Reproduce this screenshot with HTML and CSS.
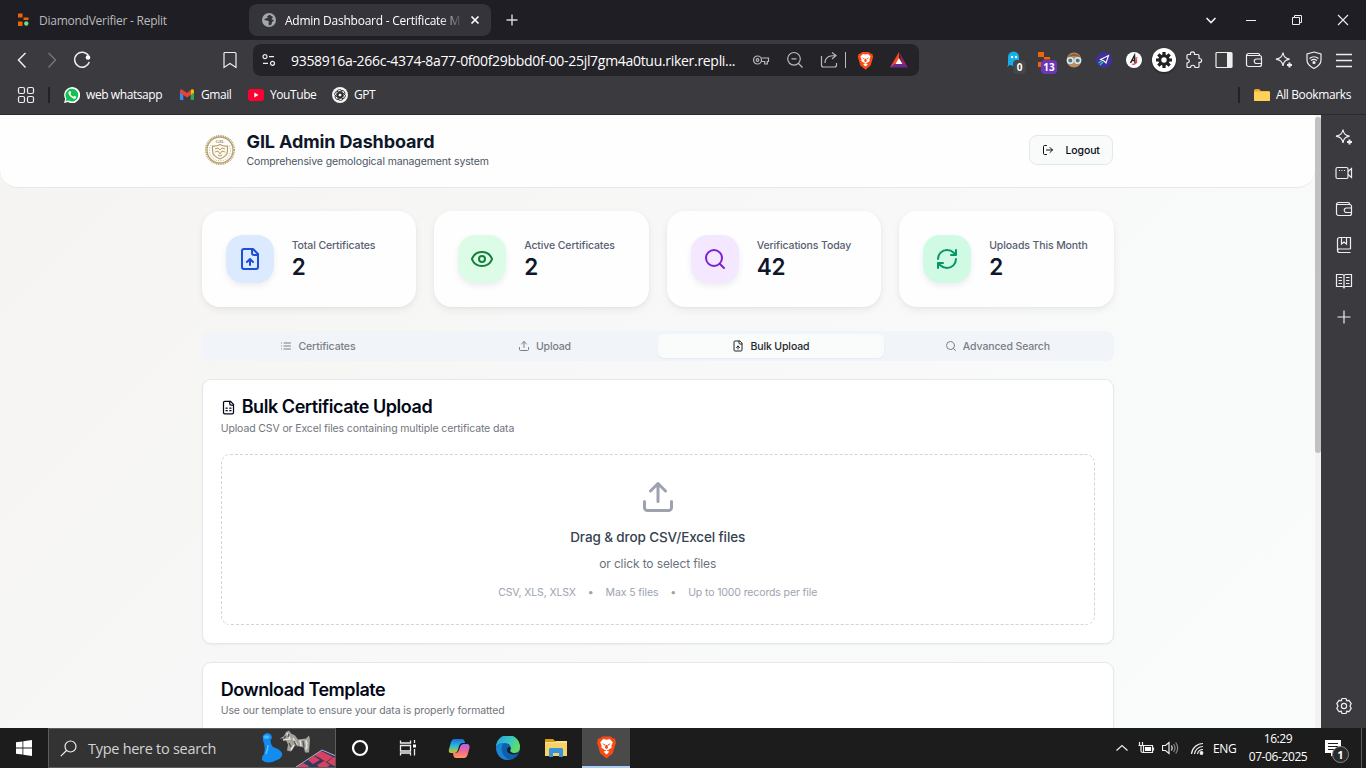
FILE: index.html
```html
<!DOCTYPE html>
<html lang="en">
<head>
<meta charset="utf-8">
<title>Admin Dashboard - Certificate Management</title>
<link rel="stylesheet" href="styles.css">
</head>
<body>
<svg class="defs" width="0" height="0">
  <symbol id="sparkle" viewBox="0 0 18 18"><path d="M8 1.5C8.6 5.5 9.7 7 14.5 8.2 9.7 9.4 8.6 10.500 8 15 7.2 10.500 6 9.400 1 8.200 6 7 7.200 5.500 8 1.500z"/><path d="M14.500 11.500v5M12 14h5" stroke-width="2"/></symbol>
  <symbol id="wallet" viewBox="0 0 18 18"><path d="M1.500 4.500h13a2 2 0 0 1 2 2v7a2 2 0 0 1-2 2h-11a2 2 0 0 1-2-2v-9a2 2 0 0 1 2-2h9.500a1.500 1.500 0 0 1 1.500 2M16.500 8h-5a2.200 2.200 0 0 0 0 4.500h5"/></symbol>
  <symbol id="file-up" viewBox="0 0 24 24"><path d="M15 2H6a2 2 0 0 0-2 2v16a2 2 0 0 0 2 2h12a2 2 0 0 0 2-2V7Z"/><path d="M14 2v4a2 2 0 0 0 2 2h4M12 12v6M15 15l-3-3-3 3"/></symbol>
  <symbol id="search" viewBox="0 0 24 24"><circle cx="11" cy="11" r="8"/><path d="m21 21-4.300-4.300"/></symbol>
  <symbol id="upload" viewBox="0 0 24 24"><path d="M21 15v4a2 2 0 0 1-2 2H5a2 2 0 0 1-2-2v-4M17 8l-5-5-5 5M12 3v12"/></symbol>
  <symbol id="brave" viewBox="0 0 20 22"><path d="M6 1h8l2 2h2l1 4-1 3-2 7-6 5-6-5-2-7-1-3 1-4h2z" fill="#fb4b14"/><path d="m10 4 3-.6 3 3-1.400 3.300.4 1.800-3 2-2 .5-2-.5-3-2 .4-1.800L4 6.400l3-3zM10 14l2.700 1.600L10 18.200l-2.700-2.600z" fill="#fff"/><path d="m5.700 7.300 3 1.200-.5 1.300zM14.300 7.300l-3 1.200.5 1.300zM9 9h2l.5 3-1.500 1-1.500-1z" fill="#fb4b14"/></symbol>
</svg>

<div class="tabstrip">
  <div class="tab tab-idle">
    <svg width="14" height="14" viewBox="0 0 14 14"><path fill="#f26207" d="M1 .5h4.500v4H1zM6.500 4.500h5v2.500h-5zM1 8.500h4.500v4.500H1z"/><circle cx="9.300" cy="10.500" r="2.200" fill="#6fdc8c"/></svg>
    <span class="t-replit">DiamondVerifier - Replit</span>
  </div>
  <div class="tab tab-active">
    <svg width="14" height="14" viewBox="0 0 14 14"><circle cx="7" cy="7" r="7" fill="#a0a7ae"/><path d="M7.500 1.800 5 3.500 6 4.800 3.500 5.500 2 7l3 .5 2 1-.5 2 .5 2 2.500-1L10 9l2-1.500L9.500 6 11 4z" fill="#35343a"/></svg>
    <span class="tab-title">Admin Dashboard - Certificate M</span>
    <svg class="tab-close" width="10" height="10" viewBox="0 0 10 10"><path d="m1.500 1.500 7 7m0-7-7 7" stroke="#fff" stroke-width="1.700"/></svg>
  </div>
  <svg class="newtab" width="12" height="12" viewBox="0 0 12 12"><path d="M6 .5v11M.5 6h11" stroke="#d8d8da" stroke-width="1.400"/></svg>
  <div class="win">
    <svg class="line" width="12" height="12" viewBox="0 0 12 12"><path d="m1.500 4 4.500 4.500L10.500 4" stroke-width="1.700"/></svg>
    <svg class="line" width="12" height="12" viewBox="0 0 12 12"><path d="M1 6.500h10" stroke-width="1"/></svg>
    <svg class="line" width="12" height="12" viewBox="0 0 12 12"><path d="M1.500 3.500h7v7h-7zM3.500 3.500v-2h7v7h-2" stroke-width="1"/></svg>
    <svg class="line" width="12" height="12" viewBox="0 0 12 12"><path d="m1 1 10 10M11 1 1 11" stroke-width="1.100"/></svg>
  </div>
</div>

<div class="toolbar">
  <div class="nav">
    <svg class="line" width="18" height="18" viewBox="0 0 18 18"><path d="M12.500 2 5.500 9l7 7.500" stroke-width="1.500"/></svg>
    <svg class="line dim" width="18" height="18" viewBox="0 0 18 18"><path d="m5.500 2 7 7-7 7.500" stroke-width="1.400"/></svg>
    <svg class="line" width="18" height="18" viewBox="0 0 18 18"><path d="M15.500 4.700A7.500 7.500 0 1 0 16.300 11" stroke-width="1.500"/><circle cx="15" cy="6.500" r="2.300" fill="#fff" stroke="none"/></svg>
  </div>
  <svg class="line bm" width="18" height="18" viewBox="0 0 18 18"><path d="M3 2.500q0-1 1-1h10q1 0 1 1v14L9 12.500 3 16.500z"/></svg>
  <div class="urlbar">
    <svg class="line" width="14" height="14" viewBox="0 0 14 14"><circle cx="3" cy="3.700" r="2"/><path d="M7 3.700h5M1 10.300h5"/><circle cx="10.500" cy="10.300" r="2"/></svg>
    <span class="url">9358916a-266c-4374-8a77-0f00f29bbd0f-00-25jl7gm4a0tuu.riker.repli...</span>
    <div class="urlicons">
      <svg class="line soft" width="18" height="18" viewBox="0 0 18 18"><circle cx="5.500" cy="9" r="4"/><circle cx="5.500" cy="9" r="1.300"/><path d="M9.400 7H16.500v3.500h-1.200V13h-2.600v-2.500H9.300"/></svg>
      <svg class="line soft" width="18" height="18" viewBox="0 0 18 18"><circle cx="8" cy="7.800" r="6.300"/><path d="m12.500 12.500 4 4M5.500 7.800h5"/></svg>
      <svg class="line soft" width="18" height="18" viewBox="0 0 18 18"><path d="M1.500 5v9a2 2 0 0 0 2 2h11a2 2 0 0 0 2-2v-2M5 12c0-5 3-7.500 10.500-7.500M12 1.500l4 3-4 3.500"/></svg>
    </div>
    <i class="urlsep"></i>
    <svg class="u-brave" width="17" height="19"><use href="#brave"/></svg>
    <svg class="u-bat" width="18" height="16" viewBox="0 0 18 16"><path d="M9 0 0 15.500l9-4z" fill="#ff4724"/><path d="m9 0 9 15.500-6-4z" fill="#9e1f63"/><path d="M0 15.500h18l-5-4H5z" fill="#662d91"/><path d="m9 6 3.500 6h-7z" fill="#fff"/></svg>
  </div>
  <div class="exts">
    <div class="ext"><svg width="18" height="18" viewBox="0 0 18 18"><path d="M3 14V6a5.500 5.500 0 0 1 11 0v8l-3-1-3 2-3-1-3 2z" fill="#16aee8"/><circle cx="7" cy="6" r="1.200" fill="#fff"/><circle cx="11" cy="6" r="1.200" fill="#fff"/></svg><b class="badge">0</b></div>
    <div class="ext"><svg width="18" height="18" viewBox="0 0 18 18"><path fill="#f26207" d="M3 1h6v5H3zM9 6h6v2.500H9zM3 11h6v5H3z"/></svg><b class="badge violet">13</b></div>
    <div class="ext"><svg width="16" height="16" viewBox="0 0 16 16"><circle cx="8" cy="8" r="7.500" fill="#bc8c65"/><path d="M1 5q7-7 14 0L8 4z" fill="#89603e"/><circle cx="4.300" cy="8.500" r="2.800" fill="#58717b" stroke="#d7eef5" stroke-width="1.500"/><circle cx="11.700" cy="8.500" r="2.800" fill="#58717b" stroke="#d7eef5" stroke-width="1.500"/></svg></div>
    <div class="ext"><svg width="16" height="16" viewBox="0 0 16 16"><circle cx="8" cy="8" r="8" fill="#40309a"/><path d="m12.500 3.500-2.500 7.500-2-2-3.500-1.500z" fill="none" stroke="#fff" stroke-width="1.100"/><path d="m2.500 11 3-2m-1.500 4 3-3" stroke="#35d0b4" stroke-width="1.200"/></svg></div>
    <div class="ext"><svg width="16" height="16" viewBox="0 0 16 16"><circle cx="8" cy="8" r="8" fill="#fff"/><path d="M4.500 11 8.500 3.500 9 11M5.500 8.500h4" fill="none" stroke="#222" stroke-width="1.500"/><path d="M11.500 5.500C8 6.500 12 8 10.500 10.500 9 12 7 12.500 6 12" fill="none" stroke="#e23b55" stroke-width="1.200"/></svg></div>
    <div class="ext"><svg class="gear" width="24" height="24" viewBox="0 0 24 24"><circle cx="12" cy="12" r="12" fill="#fff"/><g stroke="#222" fill="none"><circle cx="12" cy="12" r="4.200" stroke-width="3"/><path stroke-width="3.200" d="M12 4v3M12 17v3M4 12h3M17 12h3M6.300 6.300l2.200 2.200M15.500 15.500l2.200 2.200M6.300 17.700l2.200-2.200M15.500 8.500l2.200-2.200"/></g></svg></div>
    <div class="ext"><svg class="line" width="18" height="18" viewBox="0 0 18 18"><path d="M2 4.500Q2 3.500 3 3.500h2.500C4.500 0 10.500 0 9.500 3.500H13q1 0 1 1V7.500c3.500 0 3.500 4 0 4v4q0 1-1 1h-3c0-3-4.500-3-4.500 0H3q-1 0-1-1V12c3 0 3-4 0-4z"/></svg></div>
    <div class="ext"><svg class="line" width="18" height="18" viewBox="0 0 18 18"><rect x="1" y="1.500" width="16" height="15" rx="1"/><path d="M12 2h5v14h-5z" fill="#eee" stroke="none"/></svg></div>
    <div class="ext"><svg class="line" width="18" height="18"><use href="#wallet"/></svg></div>
    <div class="ext"><svg class="line" width="18" height="18"><use href="#sparkle"/></svg></div>
    <div class="ext"><svg class="line" width="18" height="18" viewBox="0 0 18 18"><path d="M9 1 16 3v6q0 5-7 8.500Q2 14 2 9V3z"/><path d="M4.500 7.500q4.500-3.500 9 0M6 9.500q3-2.300 6 0"/><circle cx="9" cy="11.500" r="1" fill="#fff"/></svg></div>
    <div class="ext"><svg class="line" width="18" height="18" viewBox="0 0 18 18"><path d="M1 3.500h16M1 9.500h16M1 15.500h16" stroke-width="1.500"/></svg></div>
  </div>
</div>

<div class="bookmarks">
  <svg class="line bgrid" width="18" height="18" viewBox="0 0 18 18"><rect x="1.500" y="1.500" width="6" height="6" rx="1.500"/><rect x="10.500" y="1.500" width="6" height="6" rx="1.500"/><rect x="1.500" y="10.500" width="6" height="6" rx="1.500"/><rect x="10.500" y="10.500" width="6" height="6" rx="1.500"/></svg>
  <i class="bsep"></i>
  <div class="bk bk-wa"><svg width="16" height="16" viewBox="0 0 16 16"><path d="M0 16 1.200 12A8 8 0 1 1 4 14.900z" fill="#fff"/><path d="m1.700 14.300.8-2.700a6.400 6.400 0 1 1 2.100 2z" fill="#12c251"/><path d="M5 4.500 6.300 4l1 2-.8 1Q7.500 9 9.300 9.700l1-1 2 1-.5 1.500q-1 1-3 0Q5.500 9.800 4.500 7q-.4-1.500.5-2.500z" fill="#fff"/></svg><span>web whatsapp</span></div>
  <div class="bk bk-gm"><svg width="14" height="11" viewBox="0 0 14 11"><path d="M0 2v8q0 1 1 1h2.300V4z" fill="#4285f4"/><path d="M14 2v8q0 1-1 1h-2.300V4z" fill="#34a853"/><path d="M10.700 1 12 .2Q14-.2 14 2v1.500L10.700 6z" fill="#fbbc04"/><path d="M0 3.500V2Q0-.5 2 .4L7 4l3.700-3v5L7 8.500 3.300 6z" fill="#ea4335"/></svg><span>Gmail</span></div>
  <div class="bk bk-yt"><svg width="16" height="12" viewBox="0 0 16 12"><rect width="16" height="12" rx="3" fill="#f03"/><path d="m6.300 3.500 4.200 2.500-4.200 2.500z" fill="#fff"/></svg><span>YouTube</span></div>
  <div class="bk bk-gpt"><svg width="16" height="16" viewBox="0 0 16 16"><circle cx="8" cy="8" r="8" fill="#f5f5f5"/><g fill="none" stroke="#222" stroke-width=".8"><rect x="5" y="2.500" width="5" height="8" rx="2.500"/><rect x="5" y="2.500" width="5" height="8" rx="2.500" transform="rotate(60 8 8)"/><rect x="5" y="2.500" width="5" height="8" rx="2.500" transform="rotate(120 8 8)"/><rect x="5" y="2.500" width="5" height="8" rx="2.500" transform="rotate(180 8 8)"/><rect x="5" y="2.500" width="5" height="8" rx="2.500" transform="rotate(240 8 8)"/><rect x="5" y="2.500" width="5" height="8" rx="2.500" transform="rotate(300 8 8)"/></g></svg><span>GPT</span></div>
  <i class="bsep bsep-r"></i>
  <div class="bk bk-all"><svg width="16" height="14" viewBox="0 0 16 14"><path d="M0 2.500Q0 1 1.500 1H5l2 2h7.500Q16 3 16 4.500v7q0 1.500-1.500 1.500h-13Q0 13 0 11.500z" fill="#e8a92a"/><rect y="3.500" width="16" height="9.500" rx="1" fill="#ffd257"/></svg><span>All Bookmarks</span></div>
</div>

<div class="middle">
  <main class="page">
    <header class="head">
      <div class="head-in">
        <svg class="seal" width="36" height="36" viewBox="0 0 36 36" fill="none" stroke="#b6a06a"><circle cx="18" cy="18" r="14.300" stroke-width="1.500" stroke-dasharray="1 .8"/><circle cx="18" cy="18" r="13" stroke-width="1.300"/><path d="M9 13a10.500 10.500 0 1 0 18 0" stroke-width="1" stroke-dasharray="1 1.500"/><path d="M10.500 14q4 .5 7.500-1.500 3.500 2 7.500 1.500v5q0 5-7.500 8-7.500-3-7.500-8z" stroke-width="1.200" fill="#faf7ef"/><path d="m13 17 3-1 2 2 2-2 3 1m-10 3 3-1 2 3 2-3 3 1m-7 3 2 1 2-1"/><text x="18" y="11.300" text-anchor="middle" class="seal-t" stroke="none" fill="#a08a50">GIL</text></svg>
        <div><h1 class="h1">GIL Admin Dashboard</h1><p class="tagline">Comprehensive gemological management system</p></div>
        <div class="logout"><svg class="ico" width="12" height="12" viewBox="0 0 24 24"><path d="M9 21H5a2 2 0 0 1-2-2V5a2 2 0 0 1 2-2h4M16 17l5-5-5-5M21 12H9"/></svg><span>Logout</span></div>
      </div>
    </header>
    <div class="content">
      <section class="stats">
        <div class="stat"><div class="sicon blue"><svg class="ico" width="24" height="24"><use href="#file-up"/></svg></div><div><p class="slabel">Total Certificates</p><p class="snum">2</p></div></div>
        <div class="stat"><div class="sicon green"><svg class="ico" width="24" height="24" viewBox="0 0 24 24"><path d="M2.060 12.350a1 1 0 0 1 0-.7 10.750 10.750 0 0 1 19.880 0 1 1 0 0 1 0 .7 10.750 10.750 0 0 1-19.880 0"/><circle cx="12" cy="12" r="3"/></svg></div><div><p class="slabel">Active Certificates</p><p class="snum">2</p></div></div>
        <div class="stat"><div class="sicon purple"><svg class="ico" width="24" height="24"><use href="#search"/></svg></div><div><p class="slabel">Verifications Today</p><p class="snum">42</p></div></div>
        <div class="stat"><div class="sicon emerald"><svg class="ico" width="24" height="24" viewBox="0 0 24 24"><path d="M3 12a9 9 0 0 1 9-9 9.750 9.750 0 0 1 6.740 2.740L21 8M21 3v5h-5M21 12a9 9 0 0 1-9 9 9.750 9.750 0 0 1-6.740-2.740L3 16M8 16H3v5"/></svg></div><div><p class="slabel">Uploads This Month</p><p class="snum">2</p></div></div>
      </section>
      <nav class="tabs">
        <div class="tb"><svg class="ico" width="12" height="12" viewBox="0 0 24 24"><path d="M3 12h.01M3 18h.01M3 6h.01M8 12h13M8 18h13M8 6h13"/></svg><span>Certificates</span></div>
        <div class="tb"><svg class="ico" width="12" height="12"><use href="#upload"/></svg><span>Upload</span></div>
        <div class="tb on"><svg class="ico" width="12" height="12"><use href="#file-up"/></svg><span>Bulk Upload</span></div>
        <div class="tb"><svg class="ico" width="12" height="12"><use href="#search"/></svg><span>Advanced Search</span></div>
      </nav>
      <section class="card">
        <h2 class="h2"><svg class="ico" width="15" height="15" viewBox="0 0 24 24"><path d="M15 2H6a2 2 0 0 0-2 2v16a2 2 0 0 0 2 2h12a2 2 0 0 0 2-2V7Z"/><path d="M14 2v4a2 2 0 0 0 2 2h4M8 13h2M14 13h2M8 17h2M14 17h2"/></svg><span>Bulk Certificate Upload</span></h2>
        <p class="desc">Upload CSV or Excel files containing multiple certificate data</p>
        <div class="drop">
          <svg class="ico drop-ico" width="36" height="36"><use href="#upload"/></svg>
          <p class="d1">Drag &amp; drop CSV/Excel files</p>
          <p class="d2">or click to select files</p>
          <p class="d3"><span>CSV, XLS, XLSX</span><span>•</span><span>Max 5 files</span><span>•</span><span>Up to 1000 records per file</span></p>
        </div>
      </section>
      <section class="card">
        <h2 class="h2">Download Template</h2>
        <p class="desc desc-tight">Use our template to ensure your data is properly formatted</p>
      </section>
    </div>
  </main>
  <div class="scroll"><i class="thumb"></i></div>
  <aside class="side">
    <svg class="line" width="18" height="18"><use href="#sparkle"/></svg>
    <svg class="line" width="18" height="18" viewBox="0 0 18 18"><rect x="1" y="3.500" width="12" height="11" rx="1.500"/><path d="m13 7.500 3.500-3v9l-3.500-3M4 6.500h1M6.500 6.500h1M9 6.500h1"/></svg>
    <svg class="line" width="18" height="18"><use href="#wallet"/></svg>
    <svg class="line" width="18" height="18" viewBox="0 0 18 18"><path d="M15.500 13V1.500h-11a2 2 0 0 0-2 2v11a2 2 0 0 0 2 2h11M15.500 13h-11a1.700 1.700 0 0 0-2 1.700M6.500 2v6L9 6l2.500 2V2"/></svg>
    <svg class="line" width="18" height="18" viewBox="0 0 18 18"><path d="M9 3v13.500M1.500 2.500h5.500q2 0 2 1.500 0-1.500 2-1.500h5.500v12H11q-2 0-2 1.500 0-1.500-2-1.500H1.500zM3.500 5.500H7M3.500 8.500H7M3.500 11.500H7M11 5.500h3.500M11 8.500h3.500M11 11.500h3.500"/></svg>
    <svg class="line" width="18" height="18" viewBox="0 0 18 18"><path d="M9 2.500v13M2.500 9h13"/></svg>
    <svg class="line side-gear" width="18" height="18" viewBox="0 0 18 18"><circle cx="9" cy="9" r="2.600"/><path d="m7 1.500h4l.7 2.200 2.300-.4 2.200 3.300L15 9l1.200 2.400-2.200 3.300-2.300-.4-.7 2.200H7l-.7-2.200-2.300.4-2.200-3.300L3 9 1.800 6.600 4 3.300l2.300.4z"/></svg>
  </aside>
</div>

<footer class="taskbar">
  <div class="start"><svg width="16" height="16" viewBox="0 0 16 16"><path fill="#fff" d="M0 2.300 6.500 1.400v6.200H0zM7.300 1.300 16 0v7.600H7.300zM0 8.400h6.500v6.200L0 13.700zM7.300 8.400H16V16l-8.700-1.300z"/></svg></div>
  <div class="search">
    <svg class="line" width="17" height="17" viewBox="0 0 17 17"><circle cx="10.500" cy="6.500" r="5.500"/><path d="M6.500 10.500.8 16.200"/></svg>
    <span class="ph">Type here to search</span>
    <svg class="art" width="76" height="38" viewBox="0 0 76 38"><path d="M36 38 62 21l14 6v11z" fill="#30395f"/><path fill="#ed4261" d="m54 26 7-4 6 3-7 4zM67 33l7-5 2 1v7l-2 1zM48 31l6-4 6 4-7 4zM60 29l7-4 6 3-7 5zM36 38l7-4 6 3-1 1zM57 36l7-4 6 4-3 2h-8z" opacity=".9"/><path d="M36 38 62 21l14 6" stroke="#a9b0cf" fill="none"/><path d="M3 9.500a4.500 4 0 1 1 7.500 1.500q-.5 4 2.500 7 7 2 9 6 1 5-5 7-10 5-15 0-.5-4 2-6 2-7-1-13.500z" fill="#128cf0"/><ellipse cx="6.500" cy="8" rx="3" ry="1.800" fill="#4ab5ff"/><path d="M6 25q2-5 2-9" stroke="#60bfff" stroke-width="1.500" fill="none"/><path d="m19 10 5-3 2-4 3-1.500 2 3 4 2 3 4 8-1 3-3 1 4-1 13-4 0-1-5-9-2-4 6-4-1 1-6-3-6-5 0z" fill="#a3a29c"/><path d="m27 4 3 6-7 1m10-2 4 7m3-5 1 6m5-6 1 8m-13-3-3 5m16-8-1 8" stroke="#e4e2d8" stroke-width="1.500" fill="none"/><path d="m29 5-1 3m6 4 3 6m6-6 1 6m-15-4 2 4m-7-10h2" stroke="#55544e" stroke-width="1.300" fill="none"/></svg>
  </div>
  <div class="app"><svg width="18" height="18" viewBox="0 0 18 18"><circle cx="9" cy="9" r="7" fill="none" stroke="#fff" stroke-width="2.200"/></svg></div>
  <div class="app"><svg class="line" width="18" height="18" viewBox="0 0 18 18"><path d="M1.500 1.500v2.500h10V1.500M1.500 6.500h10v5.500h-10zM1.500 16.500V14h10v2.500M15.500 1v3M15.500 10v6.500" stroke-width="1.300"/><path d="M14 5.500h3v3h-3z" fill="#fff" stroke="none"/></svg></div>
  <div class="app app-c"><svg width="22" height="21" viewBox="0 0 22 21"><defs><linearGradient id="c1" x2="0" y2="1"><stop stop-color="#2169d9"/><stop offset=".45" stop-color="#23b4e9"/><stop offset=".75" stop-color="#79c56e"/><stop offset="1" stop-color="#e6b81d"/></linearGradient><linearGradient id="c2" x2="0" y2="1"><stop stop-color="#ab66ee"/><stop offset=".5" stop-color="#f26394"/><stop offset="1" stop-color="#ff9b58"/></linearGradient></defs><path d="M6 1h8q2 0 2.500 2l.5 2h-3q-2 0-3 3l-1.500 5q-1 2-3 2H3q-3 0-2-4l2-7q1-3 3-3z" fill="url(#c1)"/><path d="M16 20H8q-2 0-2.500-2L5 15h3q2 0 3-3l1.500-4q1-2 3-2H19q3 0 2.500 4l-2 7q-1 3-3.500 3z" fill="url(#c2)"/></svg></div>
  <div class="app"><svg width="24" height="24" viewBox="0 0 24 24"><defs><linearGradient id="e1" x2="1" y2=".5"><stop stop-color="#209fe0"/><stop offset=".6" stop-color="#39c9c1"/><stop offset="1" stop-color="#65dd61"/></linearGradient></defs><circle cx="12" cy="12" r="12" fill="#0e5fac"/><path d="M0 11A12 12 0 0 1 24 11q0 6-7 6-4-1-2-4 0-6-7-6-6 0-8 4z" fill="url(#e1)"/><path d="M0 12q2-5 8-5Q5 9 5.500 14 7 22 14 23.800 2 25 0 12z" fill="#1b84d4"/><path d="M14.500 13q-2 3 2.500 4 4 .7 6-1l-1 1.500q-5 2-9.500-.5-3-3 0-6 2.500 0 2 2z" fill="#1c1c1c"/></svg></div>
  <div class="app"><svg width="22" height="20" viewBox="0 0 22 20"><path d="M0 1h8l2 2v4H0z" fill="#d99b13"/><path d="M0 4h22v14H0z" fill="#f9d267"/><path d="M0 4h9l2-1h11v2H0z" fill="#ffe08a"/><path d="M4 11.500q0-1.500 1.500-1.500h11q1.500 0 1.500 1.500V19h-4v-4H8v4H4z" fill="#3594dc"/></svg></div>
  <div class="app app-on"><svg width="21" height="24"><use href="#brave"/></svg></div>
  <div class="tray">
    <svg class="line t-up" width="12" height="8" viewBox="0 0 12 8"><path d="m.5 6.500 5.500-5 5.500 5"/></svg>
    <svg class="line t-bat" width="17" height="13" viewBox="0 0 17 13"><path d="M5.500 3.500h9v7h-9zM15.500 5.500v3M1.500 0v3M4.500 0v3M.5 3.500h5M3 4v5q0 1.500 2 1.500"/><path d="M7 5h6v4H7z" fill="#fff" stroke="none"/></svg>
    <svg class="line t-vol" width="17" height="14" viewBox="0 0 17 14"><path d="M.5 4.500h3L7 1.500v11l-3.500-3h-3z"/><path d="M9.500 4.500q1.500 2.500 0 5"/><path d="M11.500 3q3 4 0 8M13.700 1.500q4 5.500 0 11" stroke="#888"/></svg>
    <svg class="line t-wifi" width="14" height="14" viewBox="0 0 14 14"><path d="M1.500 13A11.500 11.500 0 0 1 13 2.500M4.500 13A8.500 8.500 0 0 1 13 5.500M7.500 13A5.500 5.500 0 0 1 13 8.500"/><circle cx="11.500" cy="12" r="1.300" fill="#fff"/></svg>
    <span class="eng">ENG</span>
    <div class="clock"><span>16:29</span><span>07-06-2025</span></div>
    <div class="notif"><svg width="17" height="17" viewBox="0 0 17 17"><path d="M0 0h16v13H9.500L6 16.500V13H0z" fill="#fff"/><path d="M3 3.500h10M3 6.500h10M3 9.500h7" stroke="#1c1c1c"/></svg><b class="nb">1</b></div>
    <i class="peek"></i>
  </div>
</footer>
</body>
</html>
```
FILE: styles.css
```css
* { box-sizing: border-box; }
body { margin: 0; width: 1366px; height: 768px; overflow: hidden; display: flex; flex-direction: column; background: #3b3a3f; color: #fff; font: 12px "Open Sans", "Noto Sans", sans-serif; }
p, h1, h2 { margin: 0; }
svg { display: block; flex: none; }
span { white-space: nowrap; }
.defs { position: absolute; }
.line { fill: none; stroke: #eeeeef; stroke-width: 1.2; }
.soft { stroke: #b9b9bd; }
.dim { stroke: #77767b; }
.ico { fill: none; stroke: currentColor; stroke-width: 2; stroke-linecap: round; stroke-linejoin: round; }

.tabstrip { height: 40px; flex: none; display: flex; align-items: center; background: #1f1e24; }
.tab { display: flex; align-items: center; height: 32px; }
.tab-idle { width: 249px; padding-left: 17px; gap: 8px; color: #b9b9bc; }
.tab-active { width: 242px; padding: 0 11px 0 13px; gap: 9px; background: #35343a; border-radius: 8px; }
.t-replit { letter-spacing: -.25px; }
.tab-title { width: 175px; letter-spacing: -.24px; -webkit-mask-image: linear-gradient(90deg, #000 155px, transparent 178px); mask-image: linear-gradient(90deg, #000 155px, transparent 178px); }
.tab-close { margin-left: auto; }
.newtab { margin-left: 15px; }
.win { margin-left: auto; display: flex; gap: 34px; padding-right: 17px; }
.win svg:first-child { margin-right: -6px; }

.toolbar { height: 40px; flex: none; display: flex; align-items: center; }
.nav { display: flex; gap: 12px; padding-left: 13px; width: 221px; }
.bm { margin-right: 14px; }
.urlbar { width: 666px; height: 32px; background: #242328; border-radius: 8px; display: flex; align-items: center; padding-left: 9px; }
.url { width: 461px; padding-left: 15px; font-size: 14px; letter-spacing: -.3px; }
.urlicons { display: flex; gap: 16px; padding-left: 15px; }
.urlsep { width: 1px; height: 16px; margin-left: 7px; background: #bbb; }
.u-brave { margin-left: 11px; }
.u-bat { margin-left: 16px; }
.exts { margin-left: auto; margin-right: 7px; display: flex; }
.ext { width: 30px; height: 30px; display: flex; align-items: center; justify-content: center; position: relative; }
.gear { filter: drop-shadow(0 1px 1px #0008); }
.badge { position: absolute; left: 14px; top: 15px; min-width: 13px; height: 14px; border-radius: 4px; background: #45454a; font-size: 10px; line-height: 14px; text-align: center; }
.violet { background: #6d35b8; left: 12px; width: 16px; }

.bookmarks { height: 35px; flex: none; display: flex; align-items: center; padding: 0 15px 5px 17px; border-bottom: 1px solid #2b2a2f; letter-spacing: -.42px; }
.bsep { width: 2px; height: 16px; background: #222126; margin: 0 14px 0 13px; }
.bk { display: flex; align-items: center; gap: 6px; }
.bk-wa { width: 116px; }
.bk-gm { width: 68px; gap: 7px; }
.bk-yt { width: 84px; }
.bk-all { letter-spacing: -.38px; }
.bsep-r { margin-left: auto; }

.middle { height: 613px; flex: none; display: flex; }
.page { width: 1315px; overflow: hidden; font-family: Inter, sans-serif; letter-spacing: -.12px; color: #0f172a; background: linear-gradient(135deg, #f5f4f2 0%, #f8f8f8 50%, #f9fcfb 100%); }
.head { height: 73px; background: #fefefe; border-bottom: 1px solid #e8e9e9; border-radius: 0 0 18px 18px; }
.head-in { width: 912px; margin: 0 auto; padding-top: 17px; display: flex; align-items: flex-start; gap: 9px; }
.h1 { font-size: 18px; font-weight: 700; line-height: 19px; }
.tagline { font-size: 10.5px; line-height: 15px; margin-top: 3px; color: #4b5563; }
.seal-t { font: bold 5px "Liberation Serif", serif; }
.logout { margin: 3px 1px 0 auto; width: 84px; height: 30px; border: 1px solid #e2e8f0; border-radius: 8px; background: #f9fbfb; display: flex; align-items: center; gap: 12px; padding-left: 12px; font-size: 10.5px; font-weight: 500; color: #0a0f14; }
.content { width: 912px; margin: 0 0 0 201.7px; padding-top: 23px; }
.stats { display: grid; grid-template-columns: repeat(4, 1fr); gap: 18px; }
.stat { height: 96px; border-radius: 18px; background: #fefefe; box-shadow: 0 3px 9px #0000000f, 0 1px 3px #0000000a; padding: 24px; display: flex; align-items: center; gap: 18px; }
.sicon { width: 48px; height: 48px; border-radius: 17px; display: flex; align-items: center; justify-content: center; box-shadow: 0 3px 6px #00000012; }
.blue { background: #dbeafe; color: #1d4ed8; }
.green { background: #dcfce7; color: #15803d; }
.purple { background: #f3e8ff; color: #7e22ce; }
.emerald { background: #d1fae5; color: #059669; }
.slabel { font-size: 10.5px; font-weight: 500; line-height: 15px; color: #566070; white-space: nowrap; }
.snum { font-size: 22.5px; font-weight: 600; line-height: 27px; margin: 0 0 1px; }
.tabs { margin-top: 24px; height: 30px; padding: 3px; border-radius: 8px; background: #f1f4f9; display: grid; grid-template-columns: repeat(4, 1fr); }
.tb { display: flex; align-items: center; justify-content: center; gap: 6px; font-size: 10.5px; font-weight: 500; color: #7b7f85; border-radius: 6px; }
.on { background: #fafbfb; color: #23282d; box-shadow: 0 1px 2px #0000000d; }
.card { margin-top: 18px; background: #fff; border: 1px solid #e5e7eb; border-radius: 9px; padding: 18px; box-shadow: 0 1px 2px #0000000d; }
.h2 { font-size: 18px; line-height: 18px; font-weight: 600; letter-spacing: -.45px; color: #020817; display: flex; align-items: center; gap: 6px; }
.desc { font-size: 10.5px; line-height: 15px; margin: 5px 0 18px; color: #71757b; }
.desc-tight { margin-top: 4px; }
.drop { height: 171px; border: 1px dashed #d1d5db; border-radius: 9px; display: flex; flex-direction: column; align-items: center; padding-top: 24px; }
.drop-ico { color: #9ca3af; }
.d1 { font-size: 13.5px; line-height: 21px; font-weight: 500; color: #374151; margin-top: 12px; }
.d2 { font-size: 12px; line-height: 18px; color: #6b7280; margin-top: 7px; }
.d3 { font-size: 10.5px; line-height: 15px; color: #9ca3af; margin-top: 12px; display: flex; gap: 12px; }
.scroll { width: 6px; background: #f2f2f2; padding-top: 2px; }
.thumb { display: block; height: 336px; background: #c1c1c1; border-radius: 3px; }
.side { width: 45px; display: flex; flex-direction: column; align-items: center; gap: 18px; padding: 13px 0; }
.side-gear { margin-top: auto; }

.taskbar { height: 40px; flex: none; display: flex; background: #1c1c1c; }
.start { width: 48px; display: flex; align-items: center; justify-content: center; }
.search { width: 288px; border: 1px solid #5c5c5c; background: #333; display: flex; align-items: center; padding-left: 11px; overflow: hidden; }
.ph { width: 183px; flex: none; padding-left: 11px; font-size: 14.5px; letter-spacing: -.28px; color: #d4d4d4; }
.app { width: 48px; display: flex; align-items: center; justify-content: center; }
.app-c { width: 54px; }
.app + .app-c + .app { width: 44px; }
.app + .app-c + .app + .app { width: 52px; }
.app-on { background: #4a4a4a; border-bottom: 2px solid #a9cdf5; }
.tray { margin-left: auto; display: flex; align-items: center; }
.t-up { margin-right: 10px; }
.t-bat { margin-right: 7px; }
.t-vol { margin-right: 11px; }
.t-wifi { margin-right: 9px; }
.eng { width: 23px; letter-spacing: -.3px; }
.clock { width: 84px; display: flex; flex-direction: column; align-items: center; line-height: 18px; padding-bottom: 1px; letter-spacing: -.4px; }
.notif { position: relative; width: 41px; padding-left: 5px; }
.nb { position: absolute; left: 12px; top: 6px; width: 17px; height: 17px; border-radius: 50%; border: 1px solid #888; background: #2a2a2a; font-size: 11px; line-height: 15px; text-align: center; }
.peek { width: 1px; height: 40px; background: #5a5a5a; margin-right: 4px; }
```
